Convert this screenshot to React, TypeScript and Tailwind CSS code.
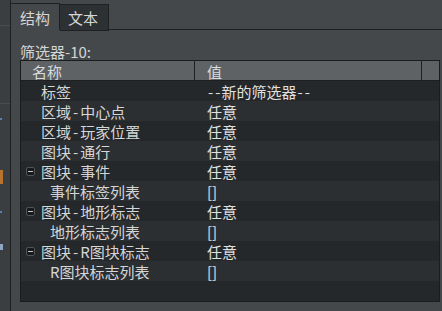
import React from 'react';

interface Row {
  name: string;
  value: string;
  level: 0 | 1;
  expander?: boolean;
}

const rows: Row[] = [
  { name: '标签', value: '--新的筛选器--', level: 0 },
  { name: '区域-中心点', value: '任意', level: 0 },
  { name: '区域-玩家位置', value: '任意', level: 0 },
  { name: '图块-通行', value: '任意', level: 0 },
  { name: '图块-事件', value: '任意', level: 0, expander: true },
  { name: '事件标签列表', value: '[]', level: 1 },
  { name: '图块-地形标志', value: '任意', level: 0, expander: true },
  { name: '地形标志列表', value: '[]', level: 1 },
  { name: '图块-R图块标志', value: '任意', level: 0, expander: true },
  { name: 'R图块标志列表', value: '[]', level: 1 },
];

const font = { fontFamily: '"Noto Sans CJK SC", "Noto Sans", sans-serif' };

const dashed = (s: string, wide: boolean) =>
  s.split('-').map((part, i) => (
    <React.Fragment key={i}>
      {i > 0 && <span className={wide ? 'px-[2px]' : 'px-[1px]'}>-</span>}
      {part}
    </React.Fragment>
  ));

const Minus = () => (
  <span className="flex items-center justify-center w-[9px] h-[9px] rounded-[2px] bg-[#17191a] border border-[#4f5457]">
    <span className="block w-[5px] h-[1px] bg-[#c8c8c8]" />
  </span>
);

const App: React.FC = () => {
  return (
    <div className="flex w-[442px] h-[311px] overflow-hidden bg-[#45484b] text-[#d6d6d6]" style={font}>
      {/* clipped neighbour panel */}
      <div className="w-[10px] h-full flex flex-col bg-[#3b3e41]">
        <div className="h-[25px]" />
        <div className="h-px bg-[#4a4d50]" />
        <div className="h-[77px]" />
        <div className="h-px bg-[#4a4d50]" />
        <div className="h-[14px]" />
        <div className="w-[2px] h-[2px] bg-[#5a7fb0]" />
        <div className="h-[50px]" />
        <div className="w-[3px] h-[14px] bg-[#b8742e]" />
        <div className="h-[27px]" />
        <div className="w-[2px] h-[2px] bg-[#5a7fb0]" />
        <div className="h-[31px]" />
        <div className="w-[3px] h-[6px] bg-[#8ea6c4]" />
      </div>

      <div className="flex-1 flex flex-col border-l border-[#1e2022]">
        {/* tabs */}
        <div className="flex h-[30px] pt-[3px] text-[15px]">
          <div className="w-[49px] h-full flex items-center pl-[9px] pt-[2px] border-t border-r border-[#1e2022] bg-[#45484b]">
            结构
          </div>
          <div className="w-[49px] h-full mt-[1px] flex items-center pl-[8px] pt-px border-t border-r border-b border-[#1e2022] bg-[#2e3134]">
            文本
          </div>
          <div className="flex-1 border-b border-[#1e2022]" />
        </div>

        <div className="pt-[14px] pl-[9px] h-[16px] box-content text-[15px] leading-[16px]">
          筛选器-10:
        </div>

        {/* table */}
        <div className="ml-[9px] w-[420px] h-[242px] flex flex-col border border-[#1a1c1e] bg-[#25282a] text-[15px]">
          <div className="flex h-[20px] bg-[#5e6265] border-b border-[#1d1f21] text-[#d8dcdf]">
            <div className="w-[174px] border-r border-[#1d1f21] pl-[11px] pt-[2px] leading-[17px]">名称</div>
            <div className="w-[227px] border-r border-[#1d1f21] pl-[12px] pt-[2px] leading-[17px]">值</div>
            <div className="flex-1" />
          </div>
          {rows.map((r, i) => (
            <div
              key={r.name}
              className={`flex h-[20px] items-center ${i % 2 === 0 ? 'bg-[#25282a]' : 'bg-[#2c2f32]'}`}
            >
              <div className={`w-[174px] flex items-center ${r.level === 0 ? 'pl-[5px]' : 'pl-[29px]'}`}>
                {r.level === 0 && (r.expander ? <Minus /> : <span className="w-[9px]" />)}
                <span className={`pt-[3px] ${r.level === 0 ? 'ml-[6px]' : ''}`}>{dashed(r.name, true)}</span>
              </div>
              <div className="pl-[12px] pt-[3px] text-[#e0e0e0]">{dashed(r.value, false)}</div>
            </div>
          ))}
        </div>
      </div>
    </div>
  );
};

export default App;
